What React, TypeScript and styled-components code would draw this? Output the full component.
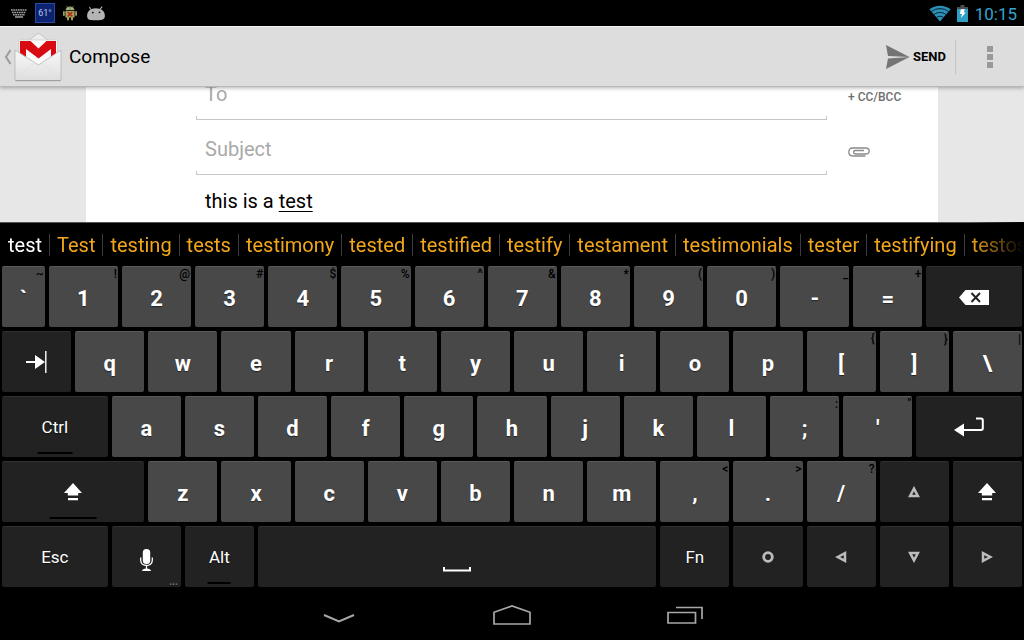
import React from "react";
import styled, { createGlobalStyle } from "styled-components";

const GlobalStyle = createGlobalStyle`
  *, *::before, *::after { box-sizing: border-box; }
  html, body { margin: 0; background: #000; }
  body { font-family: Roboto, "Liberation Sans", sans-serif; }
  button, input { font: inherit; }
  button { border: 0; padding: 0; background: none; cursor: pointer; }
  svg { display: block; }
`;

const Screen = styled.div`
  display: flex;
  flex-direction: column;
  min-height: 100vh;
  background: #000;
  overflow: hidden;
`;

const StatusBar = styled.header`
  display: flex;
  align-items: center;
  justify-content: space-between;
  height: 26px;
  padding: 0 7px 0 10px;
  color: #33a5d0;
`;

const StatusGroup = styled.div<{ $gap: number }>`
  display: flex;
  align-items: center;
  gap: ${(p) => p.$gap}px;
`;

const WeatherBadge = styled.span`
  display: flex;
  align-items: center;
  justify-content: center;
  width: 20px;
  height: 20px;
  background: #0b2371;
  border: 1px solid #2a4aa0;
  color: #b9c6e6;
  font-size: 9px;
`;

const Clock = styled.time`
  padding: 2px 0 0 1px;
  font-size: 17px;
  line-height: 24px;
`;

const ActionBar = styled.nav`
  position: relative;
  z-index: 1;
  display: flex;
  align-items: center;
  height: 61px;
  padding-left: 4px;
  background: #dddddd;
  border-top: 1px solid #f2f2f2;
  border-bottom: 1px solid #b8b8b8;
  box-shadow: 0 1px 4px rgba(0, 0, 0, 0.3);
`;

const UpButton = styled.button`
  display: flex;
  align-items: center;
  gap: 2px;
`;

const Title = styled.h1`
  flex: 1;
  margin: 0 0 0 7px;
  padding-top: 1px;
  font-size: 19px;
  line-height: 24px;
  font-weight: 400;
  color: #000;
`;

const SendButton = styled.button`
  display: flex;
  align-items: center;
  gap: 3px;
  height: 34px;
  padding-right: 9px;
  border-right: 1px solid #c4c4c4;
  font-size: 13px;
  font-weight: 700;
  color: #000;
`;

const MoreButton = styled.button`
  display: flex;
  align-items: center;
  justify-content: center;
  width: 68px;
  height: 48px;
`;

const ComposeArea = styled.main`
  flex: 1;
  min-height: 0;
  padding: 0 86px;
  background: #e7e7e7;
  overflow: hidden;
`;

const Sheet = styled.form`
  margin-top: -22px;
  min-height: 157px;
  padding: 0 0 0 110px;
  background: #fff;
`;

const FormRow = styled.div`
  display: grid;
  grid-template-columns: 1fr 111px;
  align-items: center;
`;

const Field = styled.label`
  position: relative;
  display: block;

  &::after {
    content: "";
    position: absolute;
    left: 0;
    right: 0;
    bottom: 0;
    height: 4px;
    border: 1px solid #c6c6c6;
    border-top: 0;
    pointer-events: none;
  }
`;

const FieldInput = styled.input`
  display: block;
  width: 100%;
  height: 55px;
  padding: 2px 9px 0;
  border: 0;
  outline: 0;
  background: transparent;
  font-size: 20px;
  color: #000;

  &::placeholder { color: #a9a9a9; opacity: 1; }
`;

const SideButton = styled.button`
  justify-self: start;
  margin-left: 21px;
  padding-top: 8px;
  font-size: 12px;
  line-height: 16px;
  font-weight: 500;
  color: #6e6e6e;
`;

const MessageBody = styled.div`
  padding: 14px 9px 8px;
  font-size: 20px;
  line-height: 24px;
  color: #000;
  outline: 0;

  u { text-underline-offset: 3px; text-decoration-thickness: 1px; }
`;

const Suggestions = styled.ul`
  display: flex;
  align-items: center;
  height: 43px;
  margin: 0;
  padding: 2px 0 0 1px;
  border-top: 1px solid #555;
  list-style: none;
  overflow: hidden;
  mask-image: linear-gradient(to right, #000 calc(100% - 54px), transparent 100%);
`;

const Suggestion = styled.li`
  flex: none;
  & + & { border-left: 1px solid #3c3c3c; }
`;

const Word = styled.button<{ $typed?: boolean }>`
  padding: 0 7px;
  font-size: 20px;
  line-height: 22px;
  color: ${(p) => (p.$typed ? "#ffffff" : "#f2a61c")};
`;

const Keyboard = styled.section`
  display: flex;
  flex-direction: column;
  gap: 4px;
  padding-top: 1px;
`;

const KeyRow = styled.div`
  display: flex;
`;

const Key = styled.button<{ $units: number; $dark?: boolean }>`
  position: relative;
  display: flex;
  align-items: center;
  justify-content: center;
  flex: none;
  width: calc(100% * ${(p) => p.$units} / 14 - 4px);
  height: 61px;
  margin: 0 2px;
  padding-top: ${(p) => (p.$dark ? 0 : 2)}px;
  border-top: 1px solid ${(p) => (p.$dark ? "#303030" : "#5a5a5a")};
  border-radius: 2px;
  background: ${(p) => (p.$dark ? "#222222" : "#484848")};
  color: #fff;
  font-size: ${(p) => (p.$dark ? 17 : 22)}px;
  font-weight: ${(p) => (p.$dark ? 400 : 700)};
  text-shadow: 0 1px 1px rgba(0, 0, 0, 0.5);
`;

const Hint = styled.span`
  position: absolute;
  top: 0;
  right: 1px;
  font-size: 12px;
  line-height: 15px;
  font-weight: 500;
  color: #000;
  text-shadow: none;
`;

const LockBar = styled.span`
  position: absolute;
  left: 50%;
  bottom: 3px;
  width: 33%;
  height: 2px;
  background: #000;
  transform: translateX(-50%);
`;

const MoreDots = styled.span`
  position: absolute;
  right: 3px;
  bottom: 1px;
  font-size: 10px;
  line-height: 9px;
  font-weight: 700;
  color: #777;
`;

const NavBar = styled.footer`
  display: flex;
  justify-content: center;
  padding: 3px 0 1px;
`;

const NavButton = styled.button`
  display: flex;
  align-items: center;
  justify-content: center;
  width: 173px;
  height: 49px;
`;

const NotificationKeyboard = () => (
  <svg width="18" height="10" viewBox="0 0 18 10" fill="none" stroke="#a3a3a3" strokeWidth="1.5">
    <path d="M1 2h16M2 4.5h14" strokeDasharray="1.7 .6" />
    <path d="M3 6.8h12" strokeDasharray="1.7 .6" />
    <path d="M5 9h8" />
  </svg>
);

const DebugAndroid = () => (
  <svg width="16" height="16" viewBox="0 0 16 16">
    <path d="M4.5 1l1.2 1.8M11.5 1l-1.2 1.8" stroke="#7f8c56" strokeWidth=".9" />
    <path d="M3.4 5.2a4.6 3.6 0 0 1 9.2 0z" fill="#93a164" />
    <path d="M3.4 6h9.2v6.4H11v2.8H9v-2.8H7v2.8H5v-2.8H3.4z" fill="#a39f5c" />
    <rect x="1" y="6" width="1.8" height="5" rx=".9" fill="#93a164" />
    <rect x="13.2" y="6" width="1.8" height="5" rx=".9" fill="#93a164" />
    <path d="M5.7 7l4.6 4.4M10.3 7l-4.600 4.400" stroke="#b3291a" strokeWidth="1.6" />
    <circle cx="6" cy="3.8" r=".5" fill="#fff" />
    <circle cx="10" cy="3.8" r=".5" fill="#fff" />
  </svg>
);

const AndroidHead = () => (
  <svg width="21" height="15" viewBox="-1 0 20 15">
    <path d="M4.2 3.4L3 1M13.8 3l1.8-2.4" stroke="#b4b4b4" strokeWidth="1.1" />
    <path d="M.6 10.2C.5 5.300 4 2.300 9.300 2.300c5.400 0 9 2.700 9.100 7.500 0 2.700-1.300 4-3.800 4.200-3.400.3-7.200.3-10.400 0C2 13.800.7 12.700.6 10.200z" fill="#b4b4b4" />
    <circle cx="6.300" cy="6.600" r=".9" fill="#111" />
    <circle cx="13" cy="6.300" r=".9" fill="#111" />
  </svg>
);

const WifiIcon = () => (
  <svg width="22" height="17" viewBox="0 0 22 17">
    <path d="M11 16.500L.4 4.300C6.500-.4 15.500-.4 21.600 4.300z" fill="#2b91b7" />
    <path d="M2.300 6.600c5.200-3.900 12.200-3.900 17.400 0M4.900 9.500c3.700-2.700 8.500-2.700 12.200 0M7.500 12.400c2.200-1.500 4.800-1.500 7 0" fill="none" stroke="#04222e" strokeWidth="1" />
  </svg>
);

const BatteryIcon = () => (
  <svg width="11" height="17" viewBox="0 0 11 17">
    <path d="M3.500 0h4v2H11v3H0V2h3.500z" fill="#4d4d4d" />
    <path d="M0 4h11v13H0z" fill="#2f9fc6" />
    <path d="M3.800 4.300h4L6.800 7.500h2L4 13l1-4H2.800z" fill="#fff" />
  </svg>
);

const UpChevron = () => (
  <svg width="8" height="16" viewBox="0 0 8 16">
    <path d="M6.500 1L2 8l4.500 7" fill="none" stroke="#9a9a9a" strokeWidth="2" />
  </svg>
);

const GmailIcon = () => (
  <svg width="48" height="50" viewBox="0 0 48 50">
    <defs>
      <linearGradient id="envelope" x1="0" y1="0" x2="0" y2="1">
        <stop offset="0" stopColor="#f8f8f8" />
        <stop offset="1" stopColor="#dedede" />
      </linearGradient>
    </defs>
    <path d="M14 9L23 2q1.500-1 3 0l9 7" fill="#ededed" stroke="#bdbdbd" strokeWidth=".8" />
    <path d="M5 8h38.500v28H5z" fill="#fafafa" stroke="#c6c6c6" strokeWidth=".6" />
    <path d="M6 27V9h10.500l8 7.500 8-7.500H42v18H37V17L24.500 26.500 12 17v12z" fill="#d80b12" />
    <path d="M1 18l23.500 15L47 18v29.500q0 1-1 1H2q-1 0-1-1z" fill="url(#envelope)" stroke="#b4b4b4" strokeWidth=".8" />
    <path d="M2 47l19-16.500M46 47L28 30.500" stroke="#dedede" strokeWidth=".8" />
    <path d="M1.500 48.700h45" stroke="#999" />
  </svg>
);

const SendIcon = () => (
  <svg width="24" height="24" viewBox="0 0 24 24" fill="#747474">
    <path d="M0 0L23.500 12 2 11z" />
    <path d="M0 24L23.500 12 2 13.400z" />
  </svg>
);

const OverflowIcon = () => (
  <svg width="6" height="22" viewBox="0 0 6 22" fill="#999">
    <path d="M0 0h6v6H0zM0 8h6v6H0zM0 16h6v6H0z" />
  </svg>
);

const ClipIcon = () => (
  <svg width="22" height="10" viewBox="0 0 22 10" fill="none" stroke="#8a8a8a" strokeWidth="1.300">
    <path d="M17.500 9H4.500C2 9 .8 7 .8 5S2 1 4.500 1h13C20 1 21.200 2.300 21.200 4s-1.200 3-3.700 3H7.500C6 7 5.600 6 5.600 5.300S6 3.500 7.500 3.500H16" />
  </svg>
);

const BackspaceIcon = () => (
  <svg width="30" height="15" viewBox="0 0 30 15">
    <path d="M0 7.500L6.500 0H30v15H6.500z" fill="#fff" />
    <path d="M12.500 3l8.500 9M21 3l-8.500 9" stroke="#222" strokeWidth="1.900" />
  </svg>
);

const TabIcon = () => (
  <svg width="21" height="22" viewBox="0 0 21 22">
    <path d="M0 11h11" stroke="#fff" strokeWidth="2" />
    <path d="M9 4L19 11l-10 7z" fill="#fff" />
    <path d="M19.800 0v22" stroke="#fff" strokeWidth="1.400" />
  </svg>
);

const EnterIcon = () => (
  <svg width="30" height="20" viewBox="0 0 30 20">
    <path d="M22 1.500h5q1.800 0 1.800 1.800v8q0 1.700-1.800 1.700H9" fill="none" stroke="#fff" strokeWidth="2" />
    <path d="M0 13l10-6.500v13z" fill="#fff" />
  </svg>
);

const ShiftIcon = () => (
  <svg width="18" height="18" viewBox="0 0 18 18" fill="#fff">
    <path d="M9 0l9 10h-3.800v2.500H3.800V10H0zM4 15h10v2.300H4z" />
  </svg>
);

const MicIcon = () => (
  <svg width="13" height="22" viewBox="0 0 13 22">
    <rect x="2.800" y="0" width="7.400" height="15" rx="3.500" fill="#fff" />
    <path d="M.7 8.500v2.700c0 7 11.600 7 11.600 0V8.500M6.500 16v4" fill="none" stroke="#fff" strokeWidth="1.300" />
    <path d="M2 22q.3-2.500 4.500-2.500T11 22z" fill="#fff" />
  </svg>
);

const SpaceGlyph = styled.svg`
  margin-top: 24px;
`;

const SpaceIcon = () => (
  <SpaceGlyph width="28" height="5" viewBox="0 0 28 5">
    <path d="M1 0v3.500h26V0" fill="none" stroke="#fff" strokeWidth="2" />
  </SpaceGlyph>
);

const MicWrap = styled.span`
  padding-top: 6px;
`;

const turns = { up: 0, right: 90, down: 180, left: 270 };

const ArrowIcon = ({ to }: { to: keyof typeof turns }) => (
  <svg width="12" height="12" viewBox="0 0 12 12">
    <path
      d="M6 2.600L9.900 10H2.100z"
      fill="none"
      stroke="#bcbcbc"
      strokeWidth="2.500"
      transform={`rotate(${turns[to]} 6 6)`}
    />
  </svg>
);

const CircleIcon = () => (
  <svg width="12" height="12" viewBox="0 0 12 12">
    <circle cx="6" cy="6" r="4.300" fill="none" stroke="#bcbcbc" strokeWidth="2.800" />
  </svg>
);

type KeySpec = {
  label: string;
  hint?: string;
  units?: number;
  dark?: boolean;
  lock?: boolean;
  dots?: boolean;
  icon?: React.ReactNode;
};

const letters = (text: string): KeySpec[] => text.split("").map((label) => ({ label }));

const pairs = (list: string[]): KeySpec[] => list.map((p) => ({ label: p[0], hint: p[1] }));

const fn = (label: string, rest: Partial<KeySpec> = {}): KeySpec => ({ label, dark: true, ...rest });

const rows: KeySpec[][] = [
  [
    { label: "`", hint: "~", units: 0.64 },
    ...pairs(["1!", "2@", "3#", "4$", "5%", "6^", "7&", "8*", "9(", "0)", "-_", "=+"]),
    fn("Backspace", { units: 1.36, icon: <BackspaceIcon /> }),
  ],
  [fn("Tab", { icon: <TabIcon /> }), ...letters("qwertyuiop"), ...pairs(["[{", "]}", "\\|"])],
  [
    fn("Ctrl", { units: 1.5, lock: true }),
    ...letters("asdfghjkl"),
    ...pairs([";:", "'\""]),
    fn("Enter", { units: 1.5, icon: <EnterIcon /> }),
  ],
  [
    fn("Left Shift", { units: 2, lock: true, icon: <ShiftIcon /> }),
    ...letters("zxcvbnm"),
    ...pairs([",<", ".>", "/?"]),
    fn("Up", { icon: <ArrowIcon to="up" /> }),
    fn("Right Shift", { icon: <ShiftIcon /> }),
  ],
  [
    fn("Esc", { units: 1.5 }),
    fn("Voice input", { dots: true, icon: <MicWrap><MicIcon /></MicWrap> }),
    fn("Alt", { lock: true }),
    fn("Space", { units: 5.5, icon: <SpaceIcon /> }),
    fn("Fn"),
    fn("Select", { icon: <CircleIcon /> }),
    fn("Left", { icon: <ArrowIcon to="left" /> }),
    fn("Down", { icon: <ArrowIcon to="down" /> }),
    fn("Right", { icon: <ArrowIcon to="right" /> }),
  ],
];

const words = [
  "test", "Test", "testing", "tests", "testimony", "tested", "testified",
  "testify", "testament", "testimonials", "tester", "testifying", "testosterone",
];

export default function App() {
  return (
    <Screen>
      <GlobalStyle />
      <StatusBar>
        <StatusGroup $gap={7}>
          <NotificationKeyboard />
          <WeatherBadge>61°</WeatherBadge>
          <DebugAndroid />
          <AndroidHead />
        </StatusGroup>
        <StatusGroup $gap={6}>
          <WifiIcon />
          <BatteryIcon />
          <Clock>10:15</Clock>
        </StatusGroup>
      </StatusBar>

      <ActionBar>
        <UpButton aria-label="Navigate up">
          <UpChevron />
          <GmailIcon />
        </UpButton>
        <Title>Compose</Title>
        <SendButton>
          <SendIcon />
          SEND
        </SendButton>
        <MoreButton aria-label="More options">
          <OverflowIcon />
        </MoreButton>
      </ActionBar>

      <ComposeArea>
        <Sheet onSubmit={(e) => e.preventDefault()}>
          <FormRow>
            <Field>
              <FieldInput aria-label="To" placeholder="To" />
            </Field>
            <SideButton type="button">+ CC/BCC</SideButton>
          </FormRow>
          <FormRow>
            <Field>
              <FieldInput aria-label="Subject" placeholder="Subject" />
            </Field>
            <SideButton type="button" aria-label="Attach file">
              <ClipIcon />
            </SideButton>
          </FormRow>
          <MessageBody role="textbox" aria-label="Message" contentEditable suppressContentEditableWarning>
            this is a <u>test</u>
          </MessageBody>
        </Sheet>
      </ComposeArea>

      <Suggestions>
        {words.map((word, i) => (
          <Suggestion key={word}>
            <Word $typed={i === 0}>{word}</Word>
          </Suggestion>
        ))}
      </Suggestions>

      <Keyboard aria-label="Keyboard">
        {rows.map((row, r) => (
          <KeyRow key={r}>
            {row.map((k) => (
              <Key key={k.label} $units={k.units ?? 1} $dark={k.dark} aria-label={k.label}>
                {k.icon ?? k.label}
                {k.hint && <Hint>{k.hint}</Hint>}
                {k.lock && <LockBar />}
                {k.dots && <MoreDots>...</MoreDots>}
              </Key>
            ))}
          </KeyRow>
        ))}
      </Keyboard>

      <NavBar>
        <NavButton aria-label="Hide keyboard">
          <svg width="32" height="20" viewBox="0 0 32 20" fill="none" stroke="#a8a8a8" strokeWidth="2">
            <path d="M1 10l15 6.500L31 10" />
          </svg>
        </NavButton>
        <NavButton aria-label="Home">
          <svg width="38" height="20" viewBox="0 0 38 20" fill="none" stroke="#a8a8a8" strokeWidth="1.700">
            <path d="M1 19V7.300L19 1l18 6.300V19z" />
          </svg>
        </NavButton>
        <NavButton aria-label="Recent apps">
          <svg width="36" height="18" viewBox="0 0 36 18" fill="none" stroke="#a8a8a8" strokeWidth="1.700">
            <path d="M1 6.500h27.500V17H1zM9 1.500h26V13" />
          </svg>
        </NavButton>
      </NavBar>
    </Screen>
  );
}
